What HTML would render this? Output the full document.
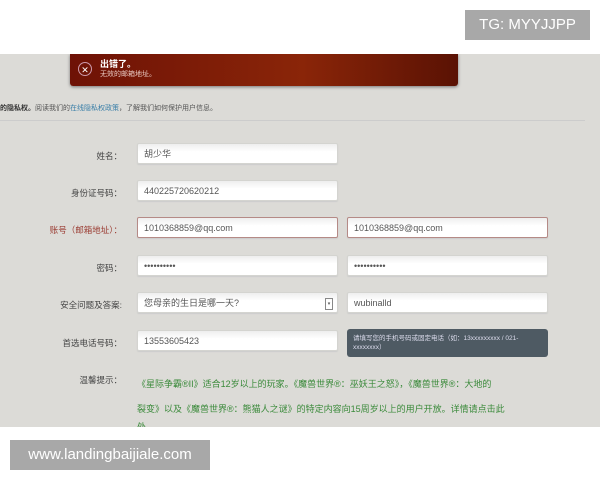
<!DOCTYPE html><html><head><meta charset="utf-8"><style>
body{margin:0;width:600px;height:480px;background:#fff;position:relative;overflow:hidden;font-family:"Liberation Sans","Noto Sans CJK SC",sans-serif;}
.gray{position:absolute;left:0;top:54px;width:600px;height:373px;background:#dcdbd7;overflow:hidden}
.abs{position:absolute}
.err{left:70px;top:0;width:388px;height:32px;background:linear-gradient(90deg,#6e1206,#8a2508 60%,#5a1204);border-radius:0 0 3px 3px;box-shadow:0 1px 3px #777}
.inp{position:absolute;height:21px;background:linear-gradient(#eee,#fff 40%);border:1px solid #d4d4d0;border-radius:2px;font-size:9px;color:#555;line-height:21px;padding-left:6px;box-sizing:border-box;box-shadow:0 1px 1px #ccc}
.red{border-color:#b58a86}
.lab{position:absolute;font-size:8.5px;color:#444;text-align:right;width:122px;left:0}
.g{position:absolute;left:137px;font-size:9px;color:#3a8a3a;white-space:nowrap}
.badge{position:absolute;background:#a8a8a8;color:#fff;font-size:15px}
</style></head><body>
<div class="gray">
<div class="abs err"><div class="abs" style="left:8px;top:8px;width:14px;height:14px;border-radius:50%;border:1px solid #c9a;color:#fff;font-size:9px;text-align:center;line-height:14px;box-sizing:border-box">✕</div>
<div class="abs" style="left:30px;top:3px;color:#fff;font-size:9px;font-weight:bold">出错了。</div>
<div class="abs" style="left:30px;top:15px;color:#e8c8c0;font-size:7px">无效的邮箱地址。</div></div>
<div class="abs" style="left:0;top:49px;font-size:7px;color:#555"><b style="color:#333">的隐私权。</b>阅读我们的<span style="color:#3a7fa8">在线隐私权政策</span>，了解我们如何保护用户信息。</div>
<div class="abs" style="left:0;top:66px;width:585px;height:1px;background:#ccc"></div>
<div class="lab" style="top:96px">姓名：</div><div class="inp" style="left:137px;top:89px;width:201px">胡少华</div>
<div class="lab" style="top:133px">身份证号码：</div><div class="inp" style="left:137px;top:126px;width:201px">440225720620212</div>
<div class="lab" style="top:170px;color:#9a3a30">账号（邮箱地址）：</div><div class="inp red" style="left:137px;top:163px;width:201px">1010368859@qq.com</div><div class="inp red" style="left:347px;top:163px;width:201px">1010368859@qq.com</div>
<div class="lab" style="top:208px">密码：</div><div class="inp" style="left:137px;top:201px;width:201px">••••••••••</div><div class="inp" style="left:347px;top:201px;width:201px">••••••••••</div>
<div class="lab" style="top:245px">安全问题及答案:</div><div class="inp" style="left:137px;top:238px;width:201px">您母亲的生日是哪一天?<span style="position:absolute;right:4px;top:5px;width:6px;height:10px;border:1px solid #888;font-size:5px;line-height:10px;text-align:center">▾</span></div><div class="inp" style="left:347px;top:238px;width:201px">wubinalld</div>
<div class="lab" style="top:283px">首选电话号码：</div><div class="inp" style="left:137px;top:276px;width:201px">13553605423</div>
<div class="abs" style="left:347px;top:275px;width:201px;height:28px;background:#4e5a63;border-radius:3px;color:#dde;font-size:6.5px;padding:5px 6px;box-sizing:border-box;line-height:9px">请填写您的手机号码或固定电话（如：13xxxxxxxxx / 021-xxxxxxxx）</div>
<div class="lab" style="top:320px">温馨提示：</div>
<div class="g" style="top:323px">《星际争霸®II》适合12岁以上的玩家。《魔兽世界®：巫妖王之怒》，《魔兽世界®：大地的</div>
<div class="g" style="top:348px">裂变》以及《魔兽世界®：熊猫人之谜》的特定内容向15周岁以上的用户开放。详情请点击此</div>
<div class="g" style="top:366px">处。</div>
</div>
<div class="badge" style="left:465px;top:10px;width:125px;height:30px;line-height:30px;text-align:center">TG: MYYJJPP</div>
<div class="badge" style="left:10px;top:440px;width:200px;height:30px;line-height:30px;text-align:center">www.landingbaijiale.com</div>
</body></html>
